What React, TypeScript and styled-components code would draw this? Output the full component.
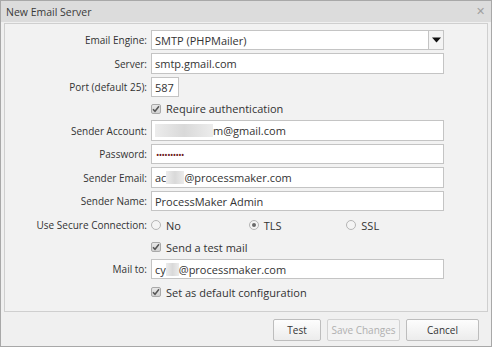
import styled, { createGlobalStyle } from "styled-components";

const Global = createGlobalStyle`
    html, body { margin: 0; padding: 0; background: #fff; }
    body { font-family: "Open Sans", "Liberation Sans", sans-serif; color: #333; }
`;

const Dialog = styled.div`
    width: 492px;
    height: 347px;
    box-sizing: border-box;
    border: 1px solid #a8a8a8;
    background: #f0f0f0;
    display: flex;
    flex-direction: column;
`;

const TitleBar = styled.div`
    height: 21px;
    flex: none;
    background: #dcdcdc;
    display: flex;
    align-items: center;
    justify-content: space-between;
    padding: 0 6px 0 5px;
    font-size: 10.5px;
    color: #3a3a3a;
`;

const Close = styled.span`
    color: #a0a0a0;
    font-size: 11px;
    line-height: 1;
    margin-top: -2px;
`;

const Panel = styled.div`
    margin: 1px 3px 0 3px;
    height: 289px;
    box-sizing: border-box;
    border: 1px solid #cfcfcf;
    background: #f2f2f2;
    padding-top: 6px;
    display: flex;
    flex-direction: column;
`;

const Row = styled.div<{ h?: number; mt?: number }>`
    display: grid;
    grid-template-columns: 142px 293px;
    column-gap: 4px;
    align-items: center;
    height: ${(p) => p.h ?? 20}px;
    margin-top: ${(p) => p.mt ?? 0}px;
`;

const Label = styled.label`
    text-align: right;
    font-size: 10px;
    color: #333;
    white-space: nowrap;
`;

const Input = styled.div<{ w?: number }>`
    width: ${(p) => p.w ?? 293}px;
    height: 100%;
    box-sizing: border-box;
    border: 1px solid #c4c4c4;
    background: #fff;
    font-size: 11px;
    color: #333;
    display: flex;
    align-items: center;
    padding-left: 3px;
    white-space: nowrap;
    overflow: hidden;
`;

const Select = styled(Input)`
    justify-content: space-between;
    padding-right: 0;
`;

const DropBtn = styled.div`
    width: 15px;
    height: 100%;
    box-sizing: border-box;
    border-left: 1px solid #c4c4c4;
    background: #f4f4f4;
    display: flex;
    align-items: center;
    justify-content: center;
`;

const Blur = styled.span<{ w: number }>`
    display: inline-block;
    width: ${(p) => p.w}px;
    height: 13px;
    background: linear-gradient(90deg, #ececec, #d9d9d9 50%, #ececec);
`;

const Dots = styled.span`
    color: #6b1515;
    font-size: 9px;
    letter-spacing: -0.6px;
    padding-left: 1px;
`;

const CheckLine = styled.div`
    grid-column: 2;
    display: flex;
    align-items: center;
    gap: 5px;
    font-size: 11px;
    color: #333;
`;

const Box = styled.span`
    width: 10px;
    height: 10px;
    box-sizing: border-box;
    border: 1px solid #a9a9a9;
    border-radius: 2px;
    background: linear-gradient(#e8e8e8, #d2d2d2);
    display: inline-flex;
    align-items: center;
    justify-content: center;
`;

const Radios = styled.div`
    display: grid;
    grid-template-columns: repeat(3, 1fr);
    font-size: 11px;
`;

const RadioItem = styled.span`
    display: flex;
    align-items: center;
    gap: 5px;
`;

const Circle = styled.span<{ on?: boolean }>`
    width: 10px;
    height: 10px;
    box-sizing: border-box;
    border: 1px solid #b5b5b5;
    border-radius: 50%;
    background: #f4f4f4;
    display: inline-flex;
    align-items: center;
    justify-content: center;
    &::after {
        content: "";
        width: 4px;
        height: 4px;
        border-radius: 50%;
        background: ${(p) => (p.on ? "#6a6a6a" : "transparent")};
    }
`;

const Footer = styled.div`
    flex: 1;
    display: flex;
    justify-content: flex-end;
    align-items: flex-start;
    gap: 6px;
    padding: 7px 12px 0 0;
`;

const Button = styled.button<{ w: number }>`
    width: ${(p) => p.w}px;
    height: 22px;
    border: 1px solid #bdbdbd;
    border-radius: 2px;
    background: linear-gradient(#fdfdfd, #ececec);
    font-family: "Open Sans", "Liberation Sans", sans-serif;
    font-size: 10px;
    color: ${(p) => (p.disabled ? "#b0b0b0" : "#333")};
    padding: 0;
    &:disabled { border-color: #d2d2d2; background: #f3f3f3; }
`;

const Check = () => (
    <Box>
        <svg width="8" height="8" viewBox="0 0 8 8">
            <path d="M1 4.2 L3 6.3 L7 1.3" fill="none" stroke="#555" strokeWidth="1.5" />
        </svg>
    </Box>
);

const App = () => {
    return (
        <>
            <Global />
            <Dialog>
                <TitleBar>
                    <span>New Email Server</span>
                    <Close>✕</Close>
                </TitleBar>
                <Panel>
                    <Row>
                        <Label>Email Engine:</Label>
                        <Select>
                            <span>SMTP (PHPMailer)</span>
                            <DropBtn>
                                <svg width="9" height="6" viewBox="0 0 9 6">
                                    <path d="M0 0.5 H9 L4.5 5.5 Z" fill="#111" />
                                </svg>
                            </DropBtn>
                        </Select>
                    </Row>
                    <Row h={21} mt={3}>
                        <Label>Server:</Label>
                        <Input>smtp.gmail.com</Input>
                    </Row>
                    <Row mt={3}>
                        <Label>Port (default 25):</Label>
                        <Input w={28}>587</Input>
                    </Row>
                    <Row h={17} mt={3}>
                        <CheckLine><Check />Require authentication</CheckLine>
                    </Row>
                    <Row h={21} mt={3}>
                        <Label>Sender Account:</Label>
                        <Input><Blur w={58} />m@gmail.com</Input>
                    </Row>
                    <Row mt={3}>
                        <Label>Password:</Label>
                        <Input><Dots>••••••••••</Dots></Input>
                    </Row>
                    <Row h={21} mt={3}>
                        <Label>Sender Email:</Label>
                        <Input>ac<Blur w={18} />@processmaker.com</Input>
                    </Row>
                    <Row mt={3}>
                        <Label>Sender Name:</Label>
                        <Input>ProcessMaker Admin</Input>
                    </Row>
                    <Row mt={4}>
                        <Label>Use Secure Connection:</Label>
                        <Radios>
                            <RadioItem><Circle />No</RadioItem>
                            <RadioItem><Circle on />TLS</RadioItem>
                            <RadioItem><Circle />SSL</RadioItem>
                        </Radios>
                    </Row>
                    <Row mt={2}>
                        <CheckLine><Check />Send a test mail</CheckLine>
                    </Row>
                    <Row mt={2}>
                        <Label>Mail to:</Label>
                        <Input>cy<Blur w={13} />@processmaker.com</Input>
                    </Row>
                    <Row mt={3}>
                        <CheckLine><Check />Set as default configuration</CheckLine>
                    </Row>
                </Panel>
                <Footer>
                    <Button w={48}>Test</Button>
                    <Button w={73} disabled>Save Changes</Button>
                    <Button w={73}>Cancel</Button>
                </Footer>
            </Dialog>
        </>
    );
};

export default App;
